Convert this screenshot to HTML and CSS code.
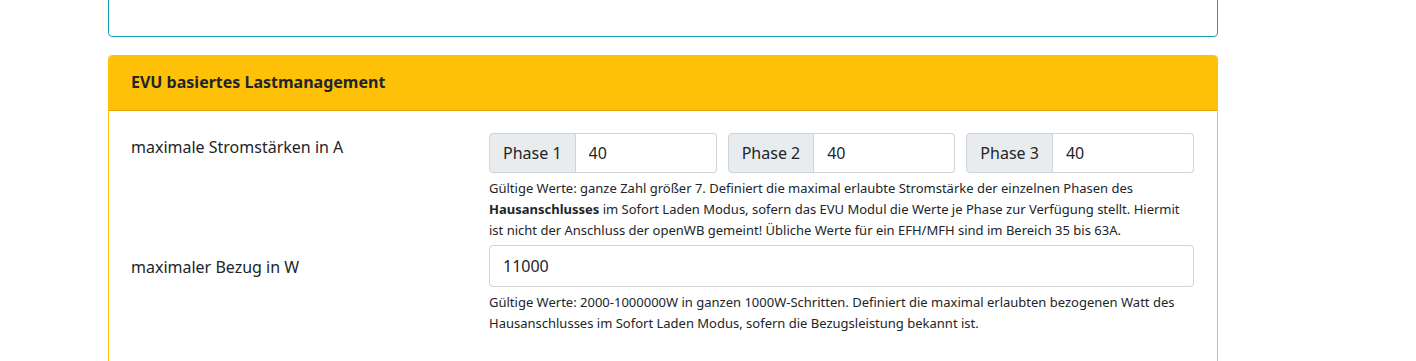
FILE: index.html
```html
<!DOCTYPE html>
<html lang="de">
<head>
    <meta charset="UTF-8">
    <title>openWB Einstellungen</title>
    <link rel="stylesheet" href="styles.css">
</head>
<body>
    <div class="container">
        <div class="card card-info">
            <div class="card-body-empty"></div>
        </div>

        <div class="card card-warning">
            <div class="card-header">EVU basiertes Lastmanagement</div>
            <div class="card-body">
                <div class="form-row">
                    <label class="form-label">maximale Stromstärken in A</label>
                    <div class="form-field">
                        <div class="phase-group">
                            <div class="input-group">
                                <span class="input-prepend">Phase 1</span>
                                <input class="form-control" type="text" value="40">
                            </div>
                            <div class="input-group">
                                <span class="input-prepend">Phase 2</span>
                                <input class="form-control" type="text" value="40">
                            </div>
                            <div class="input-group">
                                <span class="input-prepend">Phase 3</span>
                                <input class="form-control" type="text" value="40">
                            </div>
                        </div>
                        <span class="form-text">Gültige Werte: ganze Zahl größer 7. Definiert die maximal erlaubte Stromstärke der einzelnen Phasen des <b>Hausanschlusses</b> im Sofort Laden Modus, sofern das EVU Modul die Werte je Phase zur Verfügung stellt. Hiermit ist nicht der Anschluss der openWB gemeint! Übliche Werte für ein EFH/MFH sind im Bereich 35 bis 63A.</span>
                    </div>
                </div>
                <div class="form-row">
                    <label class="form-label form-label-low">maximaler Bezug in W</label>
                    <div class="form-field">
                        <input class="form-control single" type="text" value="11000">
                        <span class="form-text">Gültige Werte: 2000-1000000W in ganzen 1000W-Schritten. Definiert die maximal erlaubten bezogenen Watt des Hausanschlusses im Sofort Laden Modus, sofern die Bezugsleistung bekannt ist.</span>
                    </div>
                </div>
            </div>
        </div>
    </div>
</body>
</html>
```

FILE: styles.css
```css
body {
    margin: 0;
    font-family: "Noto Sans", "Open Sans", Arial, sans-serif;
    font-size: 16px;
    color: #212529;
    background: #fff;
    overflow: hidden;
}

.container {
    width: 1110px;
    margin: 0 0 0 108px;
}

.card {
    border: 1px solid rgba(0,0,0,0.125);
    border-radius: 4px;
    background: #fff;
    margin-bottom: 18px;
}

.card-info {
    border-color: #17a2b8;
    margin-top: -10px;
}

.card-body-empty {
    height: 45px;
}

.card-warning {
    border-color: #ffc107;
}

.card-header {
    background: #ffc107;
    border-bottom: 1px solid #e0a800;
    border-radius: 3px 3px 0 0;
    padding: 16px 22px 17px;
    font-weight: bold;
    font-size: 16px;
    line-height: 21px;
}

.card-body {
    padding: 22px 23px 40px 22px;
}

.form-row {
    display: grid;
    grid-template-columns: 328px minmax(0, 1fr);
    gap: 30px;
    margin-bottom: 4px;
}

.form-label {
    padding-top: 2px;
    line-height: 24px;
}

.form-label-low {
    padding-top: 10px;
}

.phase-group {
    display: flex;
    gap: 11px;
}

.input-group {
    display: flex;
    flex: 1;
    min-width: 0;
}

.input-prepend {
    background: #e9ecef;
    border: 1px solid #ced4da;
    border-radius: 4px 0 0 4px;
    padding: 0 13px;
    line-height: 38px;
    white-space: nowrap;
}

.form-control {
    font-family: inherit;
    font-size: 16px;
    color: #212529;
    border: 1px solid #ced4da;
    border-radius: 4px;
    padding: 0 13px;
    height: 40px;
    box-sizing: border-box;
    min-width: 0;
    outline: none;
}

.input-group .form-control {
    flex: 1;
    width: 0;
    border-left: 0;
    border-radius: 0 4px 4px 0;
}

.form-control.single {
    width: 100%;
    height: 42px;
}

.form-text {
    display: block;
    font-size: 13px;
    line-height: 21px;
    margin-top: 5px;
}
```
